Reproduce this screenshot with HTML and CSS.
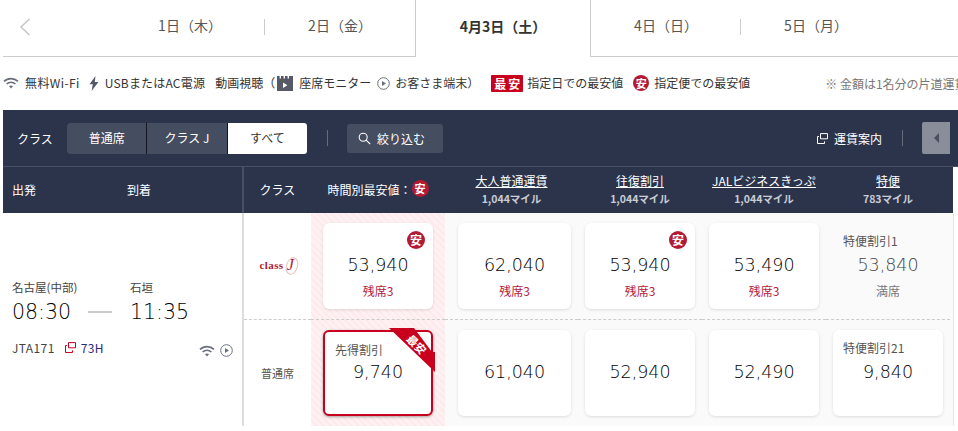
FILE: index.html
```html
<!DOCTYPE html>
<html lang="ja">
<head>
<meta charset="utf-8">
<title>運賃一覧</title>
<link rel="stylesheet" href="styles.css">
</head>
<body>
<div class="page">
  <nav class="tabs">
    <div class="prev"><svg width="12" height="18" viewBox="0 0 12 18"><path d="M10.5 1 2 9l8.5 8" fill="none" stroke="#c8c8c8" stroke-width="1.6"/></svg></div>
    <div class="tab tab-sep">1日（木）</div>
    <div class="tab">2日（金）</div>
    <div class="tab active">4月3日（土）</div>
    <div class="tab tab-sep">4日（日）</div>
    <div class="tab">5日（月）</div>
    <div class="tab-rest"></div>
  </nav>

  <div class="legend">
    <svg class="ic-wifi" width="16" height="12" viewBox="0 0 16 12"><path d="M1 4.4a10 10 0 0 1 14 0M3.6 7a6.4 6.4 0 0 1 8.8 0" fill="none" stroke="#6b6f7a" stroke-width="1.7"/><path d="M6 9.3a3 3 0 0 1 4 0L8 11.4z" fill="#6b6f7a"/></svg>
    <span class="lg-text lg-wide">無料Wi-Fi</span>
    <svg class="ic-bolt" width="10" height="15" viewBox="0 0 10 15"><path d="M6.5 0 .5 8.2h3.3L2.6 15l6.9-9H5.8z" fill="#555a66"/></svg>
    <span class="lg-text lg-usb">USBまたはAC電源</span>
    <span class="lg-text lg-video">動画視聴（</span>
    <svg class="ic-film" width="16" height="15" viewBox="0 0 16 15"><path d="M0 0h2.6v2.4H4V0h2.6v2.4H8V0h2.6v2.4H12V0h4v15H0z" fill="#555a66"/><path d="m6 6.5 4.4 2.8L6 12z" fill="#fff"/></svg>
    <span class="lg-text">座席モニター</span>
    <svg class="ic-play" width="13" height="13" viewBox="0 0 13 13"><circle cx="6.5" cy="6.5" r="5.8" fill="none" stroke="#6b6f7a"/><path d="m5 3.9 4 2.6-4 2.6z" fill="#6b6f7a"/></svg>
    <span class="lg-text">お客さま端末）</span>
    <span class="badge-low">最安</span>
    <span class="lg-text">指定日での最安値</span>
    <span class="dot lg-dot">安</span>
    <span class="lg-text">指定便での最安値</span>
    <span class="note">※ 金額は1名分の片道運賃です</span>
  </div>

  <div class="toolbar">
    <span class="tool-label">クラス</span>
    <div class="segments">
      <span class="seg">普通席</span>
      <span class="seg">クラス J</span>
      <span class="seg seg-on">すべて</span>
    </div>
    <span class="vsep sep-a"></span>
    <span class="filter"><svg width="13" height="13" viewBox="0 0 13 13"><circle cx="5.2" cy="5.2" r="4" fill="none" stroke="#fff" stroke-width="1.1"/><path d="m8.2 8.2 4 4" stroke="#fff" stroke-width="1.2"/></svg>絞り込む</span>
    <span class="fare-guide"><svg width="11" height="11" viewBox="0 0 11 11"><path d="M3.5.6h7v5.2h-7z" fill="none" stroke="#fff"/><path d="M2 3.5H.5v7h7V8.4" fill="none" stroke="#fff"/></svg>運賃案内</span>
    <span class="vsep sep-b"></span>
    <span class="collapse"><svg width="5" height="10" viewBox="0 0 5 10"><path d="M5 0v10L0 5z" fill="#4b5060"/></svg></span>
  </div>

  <div class="thead grid">
    <div class="th-left"><span>出発</span><span class="th-arr">到着</span></div>
    <div class="th-class">クラス</div>
    <div class="th-col th-best">時間別最安値：<span class="dot th-dot">安</span></div>
    <div class="th-col"><u>大人普通運賃</u><small>1,044マイル</small></div>
    <div class="th-col"><u>往復割引</u><small>1,044マイル</small></div>
    <div class="th-col"><u>JALビジネスきっぷ</u><small>1,044マイル</small></div>
    <div class="th-col"><u>特便</u><small>783マイル</small></div>
  </div>

  <div class="tbody grid">
    <div class="flight">
      <div class="f-places"><span>名古屋(中部)</span><span>石垣</span></div>
      <div class="f-times"><span>08:30</span><i class="f-dash"></i><span>11:35</span></div>
      <div class="f-meta">
        <span class="f-no">JTA171</span>
        <svg class="f-plane" width="11" height="11" viewBox="0 0 11 11"><path d="M3.5.6h7v5.2h-7z" fill="none" stroke="#c8001e"/><path d="M2 3.5H.5v7h7V8.4" fill="none" stroke="#c8001e"/></svg>
        <span class="f-code">73H</span>
        <span class="f-icons">
          <svg width="16" height="12" viewBox="0 0 16 12"><path d="M1 4.4a10 10 0 0 1 14 0M3.6 7a6.4 6.4 0 0 1 8.8 0" fill="none" stroke="#6b7183" stroke-width="1.7"/><path d="M6 9.3a3 3 0 0 1 4 0L8 11.4z" fill="#6b7183"/></svg>
          <svg width="13" height="13" viewBox="0 0 13 13"><circle cx="6.5" cy="6.5" r="5.8" fill="none" stroke="#6b7183"/><path d="m5 3.9 4 2.6-4 2.6z" fill="#6b7183"/></svg>
        </span>
      </div>
    </div>

    <div class="cl cl-j"><span class="cl-logo">class<em>J</em></span></div>
    <div class="cell hl cell-first"><div class="card"><span class="dot card-dot">安</span><b class="price">53,940</b><span class="seats">残席3</span></div></div>
    <div class="cell cell-wide"><div class="card"><b class="price">62,040</b><span class="seats">残席3</span></div></div>
    <div class="cell"><div class="card"><span class="dot card-dot">安</span><b class="price">53,940</b><span class="seats">残席3</span></div></div>
    <div class="cell"><div class="card"><b class="price">53,490</b><span class="seats">残席3</span></div></div>
    <div class="cell"><div class="card card-off"><span class="fare-name">特便割引1</span><b class="price">53,840</b><span class="seats">満席</span></div></div>

    <div class="cl row2">普通席</div>
    <div class="cell hl cell-first row2"><div class="card card-sel"><span class="fare-name">先得割引</span><b class="price">9,740</b><span class="ribbon"></span><span class="ribbon-text">最安</span></div></div>
    <div class="cell cell-wide row2"><div class="card"><b class="price">61,040</b></div></div>
    <div class="cell row2"><div class="card"><b class="price">52,940</b></div></div>
    <div class="cell row2"><div class="card"><b class="price">52,490</b></div></div>
    <div class="cell row2"><div class="card"><span class="fare-name">特便割引21</span><b class="price">9,840</b></div></div>
  </div>
</div>
</body>
</html>
```
FILE: styles.css
```css
* { box-sizing: border-box; }
html, body { margin: 0; padding: 0; background: #fff; }
body {
  width: 958px; height: 431px; overflow: hidden;
  font-family: "Noto Sans CJK JP", "Noto Sans", sans-serif;
  font-size: 12px; color: #333;
}
.page { padding-left: 3px; width: 958px; }

/* date tabs */
.tabs { display: flex; height: 57px; }
.prev { width: 112px; border-bottom: 1px solid #ccc; padding: 18px 0 0 16px; }
.prev svg { display: block; }
.tab {
  width: 150px; border-bottom: 1px solid #ccc; color: #555;
  font-size: 14px; line-height: 18px; text-align: center; padding-top: 16px; position: relative;
}
.tab-sep::after {
  content: ""; position: absolute; right: 0; top: 19px; width: 1px; height: 16px; background: #ccc;
}
.tab.active {
  width: 176px; border: 1px solid #ccc; border-width: 0 1px; font-weight: 700; color: #333;
  padding-top: 17px;
}
.tab-rest { flex: 1; border-bottom: 1px solid #ccc; }

/* legend */
.legend { display: flex; align-items: center; height: 53px; white-space: nowrap; padding-bottom: 1px; color: #333; }
.legend > * { flex: none; }
.lg-text { font-size: 12px; line-height: 16px; }
.lg-wide { letter-spacing: .4px; }
.lg-usb { letter-spacing: .2px; }
.ic-wifi { margin-right: 6px; }
.ic-bolt { margin: 0 6px 0 9px; }
.lg-video { margin-left: 10px; margin-right: 2px; }
.ic-film { margin-right: 6px; }
.ic-play { margin: 0 5px 0 6px; }
.badge-low {
  margin: 0 4px 0 12px; width: 32px; height: 17px; background: #c8001e; color: #fff;
  border-radius: 1px; font-size: 12px; font-weight: 700; line-height: 17px; text-align: center; letter-spacing: 2px; padding-left: 2px;
}
.dot {
  display: inline-block; border-radius: 50%; background: #b31b34; color: #fff; font-weight: 700; text-align: center;
}
.lg-dot { width: 16px; height: 16px; font-size: 11px; line-height: 16px; margin: 0 5px 0 10px; }
.note { margin-left: 75px; color: #777; font-size: 12px; }

/* toolbar */
.toolbar { display: flex; align-items: center; height: 57px; background: #2c344c; color: #fff; border-bottom: 1px solid #4a5063; padding-left: 14px; }
.tool-label { width: 50px; font-size: 12px; }
.segments { display: flex; gap: 1px; width: 240px; height: 31px; background: #14171f; border-radius: 3px; }
.seg {
  flex: 1; background: #454d60; text-align: center; line-height: 29px; font-size: 12px; color: #fff;
}
.seg:first-child { border-radius: 3px 0 0 3px; }
.seg-on { background: #fff; color: #333; border-radius: 0 3px 3px 0; }
.vsep { width: 1px; height: 16px; background: #666c7d; }
.sep-a { margin: 0 19px 0 20px; }
.filter {
  display: flex; align-items: center; gap: 6px; padding-left: 11px;
  width: 96px; height: 29px; background: #454d60; border-radius: 3px; font-size: 12px; color: #fff;
}
.fare-guide { display: flex; align-items: center; gap: 6px; margin-left: auto; font-size: 12px; color: #fff; }
.sep-b { margin: 0 19px 0 20px; }
.collapse {
  display: flex; align-items: center; justify-content: center;
  width: 28px; height: 32px; background: #8a8e9b; border-radius: 2px 0 0 2px; margin-right: 8px;
}

/* grid */
.grid { display: grid; grid-template-columns: 241px 67px 134px 133px 124px 124px 124px; }

.thead { width: 950px; height: 46px; background: #2c344c; color: #fff; }
.th-left { display: flex; align-items: center; padding: 0 0 2px 9px; border-right: 2px solid #4a5063; font-size: 12px; }
.th-arr { margin-left: 91px; }
.th-class { display: flex; align-items: center; justify-content: center; padding-bottom: 2px; font-size: 12px; }
.th-col { display: flex; flex-direction: column; align-items: center; justify-content: center; font-size: 12px; line-height: 18px; padding-bottom: 2px; }
.th-col small { font-size: 10.5px; line-height: 17px; color: #c9ccd4; font-weight: 700; }
.th-best { flex-direction: row; padding-top: 1px; }
.th-dot { width: 17px; height: 17px; font-size: 11px; line-height: 17px; margin-top: -2px; }

/* body */
.tbody { width: 951px; padding-right: 3px; grid-template-rows: 107px 106px; background: #fafafa; border-right: 1px solid #e8e8ec; }
.flight {
  grid-row: 1 / span 2; background: #fff; border-right: 2px solid #ddd;
  padding: 65px 0 0 9px;
}
.f-places { display: flex; font-size: 11.5px; line-height: 18px; color: #444; }
.f-places span:first-child { width: 118px; }
.f-times { display: flex; align-items: center; height: 32px; font-family: "DejaVu Sans", sans-serif; font-size: 20.5px; font-weight: 300; color: #000; }
.f-times span:first-child { width: 58px; }
.f-dash { width: 24px; height: 2px; background: #ccc; margin: 0 18px; }
.f-meta { display: flex; align-items: center; margin-top: 8px; height: 22px; font-size: 12px; color: #444; padding-right: 9px; }
.f-no { letter-spacing: .4px; }
.f-plane { margin: 0 5px 0 10px; }
.f-code { color: #2b2a78; letter-spacing: .3px; }
.f-icons { margin-left: auto; display: flex; align-items: center; gap: 5px; padding-top: 7px; }
.f-icons svg { display: block; }

.cl {
  display: flex; align-items: center; justify-content: center; background: #fff;
  font-size: 11px; color: #555;
}
.cl-logo { display: flex; align-items: center; padding-bottom: 2px; font-family: "Liberation Serif", serif; font-weight: 700; font-size: 11px; color: #b3202f; letter-spacing: .4px; }
.cl-logo em { position: relative; margin-left: 2px; width: 10px; font-size: 16px; line-height: 16px; font-weight: 400; text-align: center; }
.cl-logo em::before {
  content: ""; position: absolute; left: 0; top: 0; width: 10px; height: 16px;
  border: 1px solid #eeb8bc; border-radius: 50%; transform: rotate(18deg);
}

.cell { padding: 10px 7px; border-bottom: 1px dashed #ccc; }
.cell-first { padding: 10px 12px; }
.cell-wide { padding: 10px 7px 10px 13px; }
.cl.cl-j { border-bottom: 1px dashed #ccc; }
.row2 { border-bottom: 0; }
.hl {
  background: repeating-linear-gradient(45deg, #fff1f2 0 3px, #fdeaec 3px 5px);
}
.card {
  position: relative; height: 86px; background: #fff; border-radius: 6px;
  box-shadow: 0 1px 3px rgba(0,0,0,.12);
  display: flex; flex-direction: column; align-items: center;
}
.price {
  position: absolute; left: 0; right: 0; top: 31px; text-align: center;
  font-family: "DejaVu Sans", sans-serif; font-weight: 300; font-size: 17.5px; line-height: 22px; color: #000;
}
.seats { position: absolute; left: 0; right: 0; top: 60px; text-align: center; font-size: 12px; line-height: 16px; color: #b8203a; }
.card-dot { position: absolute; right: 8px; top: 8px; width: 18px; height: 18px; font-size: 12px; line-height: 18px; }
.fare-name { position: absolute; left: 10px; top: 9px; font-size: 12px; line-height: 18px; color: #555; }
.card-off { background: transparent; box-shadow: none; }
.card-off .price { color: #444; }
.card-off .seats { color: #777; }
.card-sel { border: 2px solid #c8001e; box-shadow: 0 1px 3px rgba(0,0,0,.35); }
.card-sel .price { top: 29px; left: -2px; right: -2px; }
.card-sel .fare-name { top: 9px; left: 10px; }
.ribbon {
  position: absolute; right: -4px; top: -4px; width: 46px; height: 44px;
  background: #c8001e; clip-path: polygon(0 0, 25px 0, 43px 24px, 46px 24px, 46px 44px);
}
.ribbon-text {
  position: absolute; right: 3px; top: 5px; color: #fff; font-size: 11px; line-height: 14px; font-weight: 700;
  transform: rotate(45deg);
}
```
